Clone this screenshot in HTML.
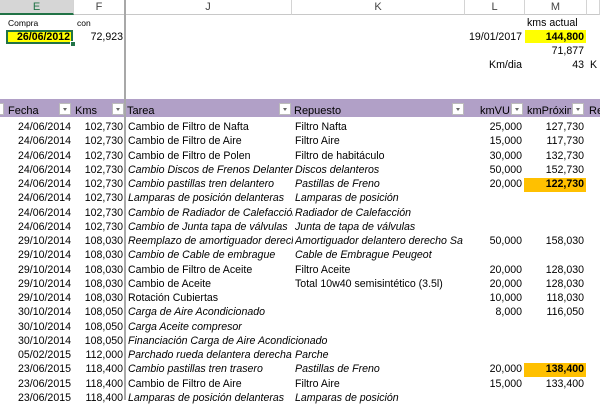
<!DOCTYPE html>
<html><head><meta charset="utf-8"><style>
body{margin:0;width:600px;height:400px;overflow:hidden;background:#fff;font-family:"Liberation Sans",Arial,sans-serif;font-size:10.6px;color:#000;position:relative}
div{position:absolute;white-space:nowrap}
.r{text-align:right}
.hd{top:0;height:15px;background:#fff;border-bottom:1px solid #c8c8c8;border-right:1px solid #d4d4d4;color:#444;font-size:11px;text-align:center;line-height:15px;box-sizing:border-box}
.btn{width:12px;height:12px;background:#fff;border:1px solid #bbb;box-sizing:border-box;top:103px}
.btn:after{content:"";position:absolute;left:3px;top:4px;border-left:2.5px solid transparent;border-right:2.5px solid transparent;border-top:3px solid #666}
.it{font-style:italic}
</style></head><body>
<div class="hd" style="left:0;width:74px;background:#d6d6d6;color:#217346;border-bottom:2px solid #217346">E</div>
<div class="hd" style="left:74px;width:51px">F</div>
<div class="hd" style="left:125px;width:167px">J</div>
<div class="hd" style="left:292px;width:173px">K</div>
<div class="hd" style="left:465px;width:60px">L</div>
<div class="hd" style="left:525px;width:62px">M</div>
<div class="hd" style="left:587px;width:13px"></div>
<div style="left:124px;top:0;width:2px;height:400px;background:#a8a8a8"></div>

<div style="left:8px;top:18px;font-size:8.5px">Compra</div>
<div style="left:77px;top:18px;font-size:8.5px">con</div>
<div style="left:6px;top:30px;width:67px;height:14px;background:#ffff00;border:2px solid #217346;box-sizing:border-box"></div>
<div style="left:70px;top:41px;width:4px;height:4px;background:#217346;border:1px solid #fff"></div>
<div class="r" style="left:6px;width:64px;top:31px;font-weight:bold">26/06/2012</div>
<div class="r" style="left:74px;width:49px;top:31px">72,923</div>
<div style="left:527px;top:17px">kms actual</div>
<div class="r" style="left:440px;width:82px;top:31px">19/01/2017</div>
<div style="left:525px;top:30px;width:61px;height:13px;background:#ffff00"></div>
<div class="r" style="left:525px;width:59px;top:31px;font-weight:bold">144,800</div>
<div class="r" style="left:525px;width:59px;top:45px">71,877</div>
<div class="r" style="left:440px;width:82px;top:59px">Km/dia</div>
<div class="r" style="left:525px;width:59px;top:59px">43</div>
<div style="left:590px;top:59px">K</div>

<div style="left:0;top:99px;width:600px;height:18px;background:#b1a0c7"></div>
<div style="left:124px;top:99px;width:2px;height:18px;background:#a8a8a8"></div>
<div class="btn" style="left:-8px"></div>
<div style="left:8px;top:105px;font-size:11px">Fecha</div>
<div class="btn" style="left:59px"></div>
<div style="left:75px;top:105px;font-size:11px">Kms</div>
<div class="btn" style="left:112px"></div>
<div style="left:127px;top:105px;font-size:11px">Tarea</div>
<div class="btn" style="left:279px"></div>
<div style="left:294px;top:105px;font-size:11px">Repuesto</div>
<div class="btn" style="left:452px"></div>
<div style="left:480px;top:105px;font-size:11px">kmVU</div>
<div class="btn" style="left:511px"></div>
<div style="left:527px;top:105px;font-size:11px;width:44px;overflow:hidden">kmPróximo</div>
<div class="btn" style="left:572px"></div>
<div style="left:589px;top:105px;font-size:11px">Re</div>

<div style="left:524px;top:178px;width:62px;height:14px;background:#ffc000"></div>
<div style="left:524px;top:363px;width:62px;height:14px;background:#ffc000"></div>

<div id="rows"></div>
<script>
var R=[
["24/06/2014","102,730","Cambio de Filtro de Nafta","Filtro Nafta","25,000","127,730",0],
["24/06/2014","102,730","Cambio de Filtro de Aire","Filtro Aire","15,000","117,730",0],
["24/06/2014","102,730","Cambio de Filtro de Polen","Filtro de habitáculo","30,000","132,730",0],
["24/06/2014","102,730","Cambio Discos de Frenos Delantero","Discos delanteros","50,000","152,730",1],
["24/06/2014","102,730","Cambio pastillas tren delantero","Pastillas de Freno","20,000","122,730",1,1],
["24/06/2014","102,730","Lamparas de posición delanteras","Lamparas de posición","","",1],
["24/06/2014","102,730","Cambio de Radiador de Calefacción","Radiador de Calefacción","","",1],
["24/06/2014","102,730","Cambio de Junta tapa de válvulas","Junta de tapa de válvulas","","",1],
["29/10/2014","108,030","Reemplazo de amortiguador derecho","Amortiguador delantero derecho Sachs","50,000","158,030",1],
["29/10/2014","108,030","Cambio de Cable de embrague","Cable de Embrague Peugeot","","",1],
["29/10/2014","108,030","Cambio de Filtro de Aceite","Filtro Aceite","20,000","128,030",0],
["29/10/2014","108,030","Cambio de Aceite","Total 10w40 semisintético (3.5l)","20,000","128,030",0],
["29/10/2014","108,030","Rotación Cubiertas","","10,000","118,030",0],
["30/10/2014","108,050","Carga de Aire Acondicionado","","8,000","116,050",1],
["30/10/2014","108,050","Carga Aceite compresor","","","",1],
["30/10/2014","108,050","Financiación Carga de Aire Acondicionado","","","",1,0,1],
["05/02/2015","112,000","Parchado rueda delantera derecha","Parche","","",1],
["23/06/2015","118,400","Cambio pastillas tren trasero","Pastillas de Freno","20,000","138,400",1,1],
["23/06/2015","118,400","Cambio de Filtro de Aire","Filtro Aire","15,000","133,400",0],
["23/06/2015","118,400","Lamparas de posición delanteras","Lamparas de posición","","",1]];
var h="";
R.forEach(function(r,i){var t=121+i*14.25;var it=r[6]?"font-style:italic;":"";
h+='<div class="r" style="left:0;width:71px;top:'+t+'px">'+r[0]+'</div>';
h+='<div class="r" style="left:74px;width:49px;top:'+t+'px">'+r[1]+'</div>';
h+='<div style="left:128px;top:'+t+'px;'+it+(r[8]?'':'width:165px;overflow:hidden')+'">'+r[2]+'</div>';
h+='<div style="left:295px;top:'+t+'px;'+it+'width:168px;overflow:hidden">'+r[3]+'</div>';
h+='<div class="r" style="left:465px;width:57px;top:'+t+'px">'+r[4]+'</div>';
h+='<div class="r" style="left:525px;width:59px;top:'+t+'px;'+(r[7]?'font-weight:bold':'')+'">'+r[5]+'</div>';});
document.getElementById("rows").innerHTML=h;
</script>
</body></html>
